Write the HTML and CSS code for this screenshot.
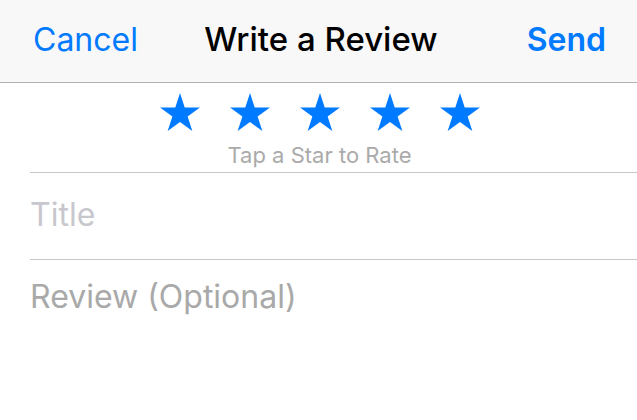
FILE: index.html
```html
<!DOCTYPE html>
<html>
<head>
  <title>Write a Review</title>
  <link rel="stylesheet" href="styles.css">
</head>
<body>
  <svg width="0" height="0" class="defs">
    <symbol id="star" viewBox="0 0 40 38">
      <polygon points="20,0 24.71,14.51 39.97,14.51 27.63,23.48 32.34,37.99 20,29.02 7.66,37.99 12.37,23.48 0.03,14.51 15.29,14.51"/>
    </symbol>
  </svg>
  <div class="navbar">
    <span class="nav-btn">Cancel</span>
    <span class="nav-title">Write a Review</span>
    <span class="nav-btn nav-send">Send</span>
  </div>

  <div class="rating">
    <div class="stars">
      <svg class="star"><use href="#star"/></svg>
      <svg class="star"><use href="#star"/></svg>
      <svg class="star"><use href="#star"/></svg>
      <svg class="star"><use href="#star"/></svg>
      <svg class="star"><use href="#star"/></svg>
    </div>
    <div class="hint">Tap a Star to Rate</div>
  </div>

  <div class="form">
    <div class="field field-title">Title</div>
    <div class="field field-review">Review (Optional)</div>
  </div>
</body>
</html>
```

FILE: styles.css
```css
body {
  margin: 0;
  font-family: Inter, "Liberation Sans", sans-serif;
  background-color: #fff;
  width: 637px;
  height: 420px;
  overflow: hidden;
}
.defs {
  position: absolute;
}
.navbar {
  height: 83px;
  background-color: #f8f8f8;
  border-bottom: 1px solid #b2b2b2;
  display: grid;
  grid-template-columns: 1fr auto 1fr;
  align-items: center;
  padding: 0 31px 4px 33px;
  box-sizing: border-box;
}
.nav-btn {
  color: #007aff;
  font-size: 32px;
}
.nav-send {
  font-weight: 600;
  justify-self: end;
}
.nav-title {
  color: #000;
  font-size: 33px;
  font-weight: 500;
  padding-left: 3px;
}
.rating {
  padding-top: 10px;
  text-align: center;
}
.stars {
  display: flex;
  justify-content: center;
  gap: 30px;
  padding-left: 3px;
}
.star {
  width: 40px;
  height: 38px;
  fill: #007aff;
}
.hint {
  color: #aaaaaa;
  font-size: 22px;
  line-height: 28px;
  margin-top: 10px;
  height: 31px;
  padding-left: 2px;
}
.form {
  margin-left: 30px;
}
.field {
  border-top: 1px solid #c8c7cc;
  height: 87px;
  font-size: 32px;
  line-height: 40px;
  box-sizing: border-box;
}
.field-title {
  color: #c7c7cd;
  padding-top: 22px;
}
.field-review {
  color: #a9a9a9;
  padding-top: 17px;
}
```
